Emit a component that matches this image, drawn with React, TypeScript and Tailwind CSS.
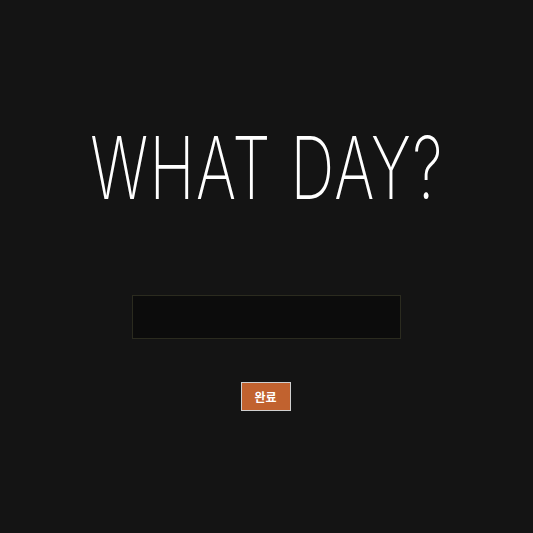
export default function App() {
  return (
    <div className="w-[533px] h-[533px] bg-[#141414] flex flex-col items-center">
      <h1
        className="mt-[118px] text-white text-[86px] leading-[100px] font-extralight tracking-[2px] scale-x-[0.71] whitespace-nowrap"
        style={{ fontFamily: "Inter, 'DejaVu Sans', sans-serif" }}
      >
        WHAT DAY?
      </h1>
      <input
        type="text"
        className="mt-[77px] w-[269px] h-[44px] bg-[#0c0c0c] border border-[#2b2b1f] outline-none text-white px-2"
      />
      <button
        className="mt-[43px] ml-[-2px] w-[50px] h-[29px] bg-[#c1622f] border border-[#cfcfcf] text-white text-[12px] font-bold"
        style={{ fontFamily: "'Noto Sans CJK KR', sans-serif" }}
      >
        완료
      </button>
    </div>
  );
}
